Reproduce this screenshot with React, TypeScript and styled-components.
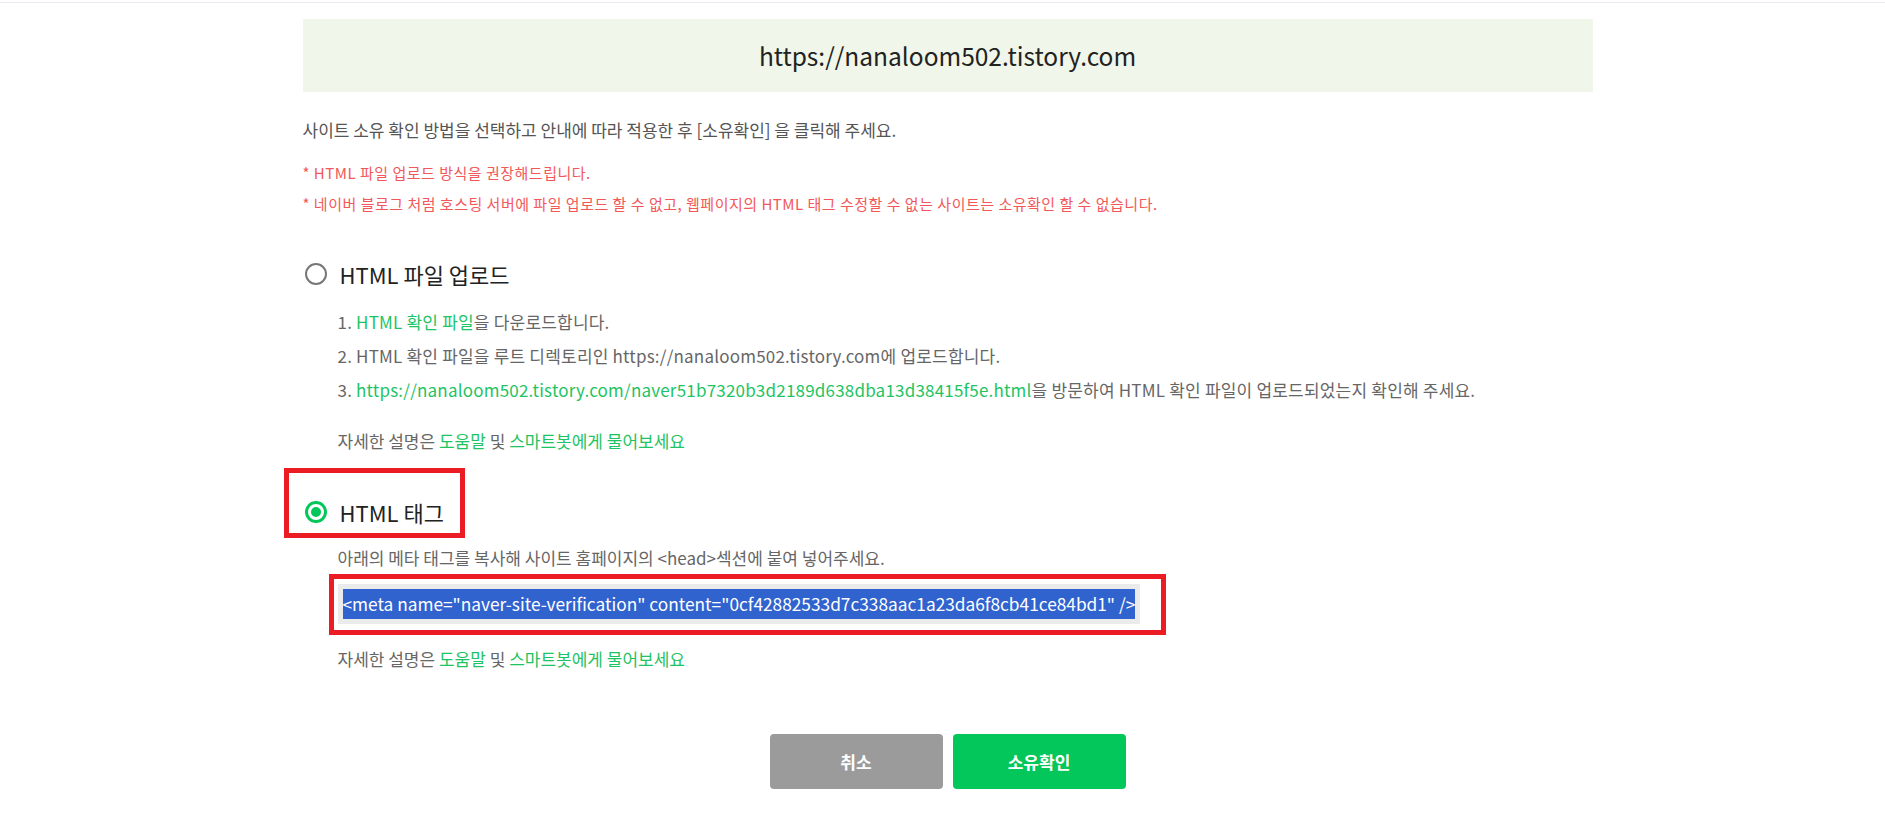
import React from 'react';
import styled, { createGlobalStyle } from 'styled-components';

const GlobalStyle = createGlobalStyle`
  body {
    margin: 0;
    background: #fff;
    font-family: 'Noto Sans CJK KR', 'Noto Sans', sans-serif;
    color: #555;
  }
`;

const TopBar = styled.div`
  height: 2px;
  border-bottom: 1px solid #e9e9f3;
`;

const Page = styled.div`
  padding-left: 10px;
`;

const Container = styled.div`
  width: 1290px;
  margin: 0 auto;
  padding-top: 16px;
  padding-bottom: 28px;
`;

const UrlBox = styled.div`
  height: 73px;
  background: #f0f6e9;
  display: flex;
  align-items: center;
  justify-content: center;
  font-size: 24.5px;
  color: #222;
`;

const Intro = styled.p`
  margin: 28px 0 0;
  font-size: 17px;
  line-height: 20px;
  color: #555;
`;

const Notices = styled.ul`
  list-style: none;
  margin: 17px 0 0;
  padding: 0;
  font-size: 15px;
  letter-spacing: 0.5px;
  line-height: 31px;
  color: #f2585a;
`;

const Option = styled.section`
  margin-top: ${(p: { $top: number }) => p.$top}px;
`;

const OptionRow = styled.label`
  display: flex;
  align-items: center;
  gap: 13px;
  height: 30px;
  font-size: 22px;
  color: #222;
`;

const Radio = styled.span<{ $checked?: boolean }>`
  box-sizing: border-box;
  width: 22px;
  height: 22px;
  margin-left: 2px;
  border-radius: 50%;
  border: ${(p) => (p.$checked ? '3px solid #03c75a' : '2px solid #777')};
  display: flex;
  align-items: center;
  justify-content: center;
  &::after {
    content: '';
    display: ${(p) => (p.$checked ? 'block' : 'none')};
    width: 10px;
    height: 10px;
    border-radius: 50%;
    background: #03c75a;
  }
`;

const Marked = styled.div<{ $pad: string; $shift: number; $top: number }>`
  width: fit-content;
  border: 5px solid #ec1c24;
  padding: ${(p) => p.$pad};
  margin-left: ${(p) => p.$shift}px;
  margin-top: ${(p) => p.$top}px;
`;

const Body = styled.div`
  padding-left: 35px;
`;

const Steps = styled.ol`
  list-style: none;
  margin: 16px 0 0;
  padding: 0;
  font-size: 17px;
  letter-spacing: 0.2px;
  line-height: 34px;
  color: #666;
`;

const Line = styled.p<{ $top: number; $height?: number }>`
  margin: ${(p) => p.$top}px 0 0;
  font-size: 17px;
  line-height: ${(p) => p.$height ?? 34}px;
  color: #666;
`;

const Green = styled.a`
  color: #1ec463;
  text-decoration: none;
`;

const CodeBox = styled.div`
  width: fit-content;
  background: #ebebeb;
  padding: 5px;
`;

const Selected = styled.span`
  display: block;
  height: 30px;
  line-height: 30px;
  background: #3163cf;
  color: #fff;
  font-size: 17.3px;
  white-space: nowrap;
`;

const Buttons = styled.div`
  display: flex;
  justify-content: center;
  gap: 10px;
  margin-top: 58px;
`;

const Button = styled.button<{ $primary?: boolean }>`
  width: 173px;
  height: 55px;
  border: none;
  border-radius: 4px;
  background: ${(p) => (p.$primary ? '#03c75a' : '#9b9b9b')};
  color: #fff;
  font-family: inherit;
  font-size: 17px;
  font-weight: 700;
`;

const site = 'https://nanaloom502.tistory.com';
const checkFile = `${site}/naver51b7320b3d2189d638dba13d38415f5e.html`;

const Help: React.FC<{ top: number }> = ({ top }) => (
  <Line $top={top}>
    자세한 설명은 <Green href="#">도움말</Green> 및 <Green href="#">스마트봇에게 물어보세요</Green>
  </Line>
);

export default function App() {
  return (
    <>
      <GlobalStyle />
      <TopBar />
      <Page>
        <Container>
          <UrlBox>{site}</UrlBox>
          <Intro>사이트 소유 확인 방법을 선택하고 안내에 따라 적용한 후 [소유확인] 을 클릭해 주세요.</Intro>
          <Notices>
            <li>* HTML 파일 업로드 방식을 권장해드립니다.</li>
            <li>
              * 네이버 블로그 처럼 호스팅 서버에 파일 업로드 할 수 없고, 웹페이지의 HTML 태그 수정할 수 없는 사이트는
              소유확인 할 수 없습니다.
            </li>
          </Notices>

          <Option $top={40}>
            <OptionRow>
              <Radio />
              HTML 파일 업로드
            </OptionRow>
            <Body>
              <Steps>
                <li>
                  1. <Green href="#">HTML 확인 파일</Green>을 다운로드합니다.
                </li>
                <li>2. HTML 확인 파일을 루트 디렉토리인 {site}에 업로드합니다.</li>
                <li>
                  3. <Green href="#">{checkFile}</Green>을 방문하여 HTML 확인 파일이 업로드되었는지 확인해 주세요.
                </li>
              </Steps>
              <Help top={17} />
            </Body>
          </Option>

          <Option $top={0}>
            <Marked $pad="24px 16px 6px 14px" $shift={-19} $top={10}>
              <OptionRow>
                <Radio $checked />
                HTML 태그
              </OptionRow>
            </Marked>
            <Body>
              <Line $top={5} $height={30}>
                아래의 메타 태그를 복사해 사이트 홈페이지의 &lt;head&gt;섹션에 붙여 넣어주세요.
              </Line>
              <Marked $pad="5px 21px 6px 4px" $shift={-9} $top={1}>
                <CodeBox>
                  <Selected>
                    {'<meta name="naver-site-verification" content="0cf42882533d7c338aac1a23da6f8cb41ce84bd1" />'}
                  </Selected>
                </CodeBox>
              </Marked>
              <Help top={7} />
            </Body>
          </Option>

          <Buttons>
            <Button>취소</Button>
            <Button $primary>소유확인</Button>
          </Buttons>
        </Container>
      </Page>
    </>
  );
}
